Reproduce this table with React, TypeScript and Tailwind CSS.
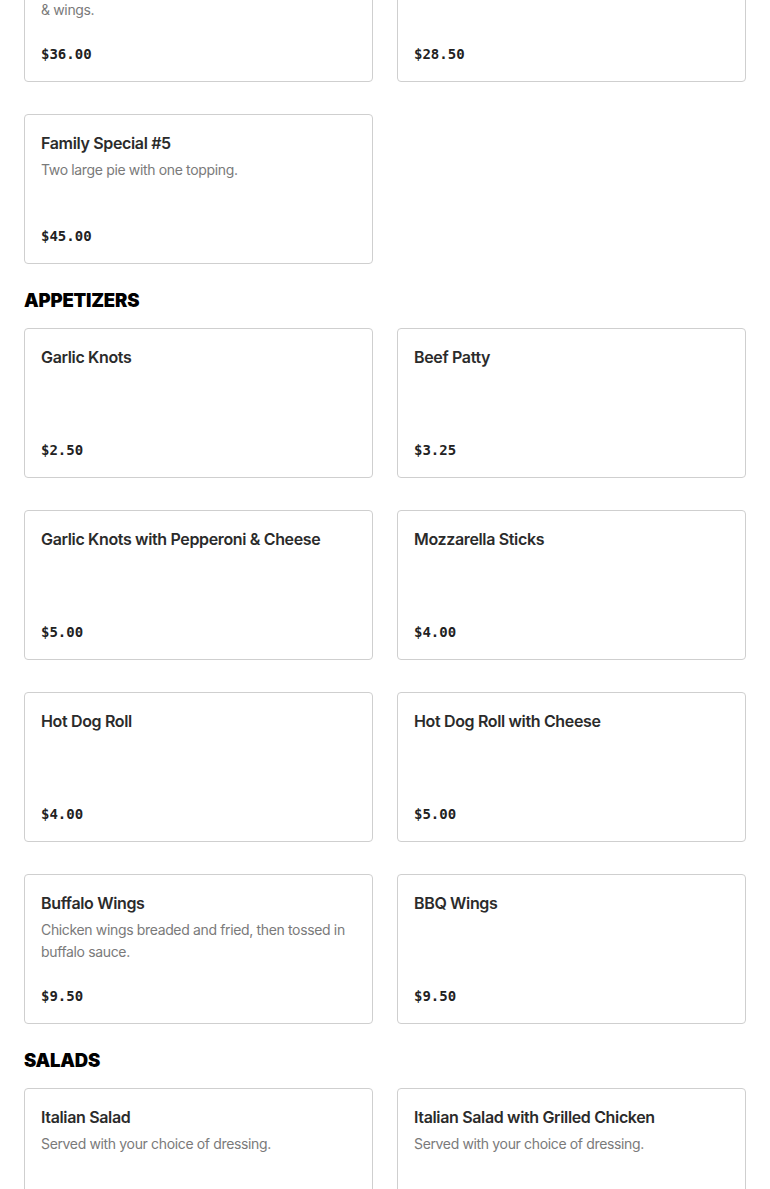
import React from "react";

type Item = { name: string; desc?: React.ReactNode; price: string };

const Card = ({ item }: { item: Item }) => (
  <div className="flex min-h-[150px] flex-col justify-between rounded-[4px] border border-[#cfcfcf] bg-white px-4 pt-4 pb-[17px]">
    <div>
      <div className="text-[16px] leading-6 font-semibold tracking-[-0.35px] text-[#2b2b2b]">{item.name}</div>
      {item.desc && (
        <div className="mt-[4px] text-[14px] leading-[22px] tracking-[-0.35px] text-[#7a7a7a]">{item.desc}</div>
      )}
    </div>
    <div className="mt-4 font-['DejaVu_Sans_Mono',monospace] text-[14px] leading-5 font-bold text-[#222]">
      {item.price}
    </div>
  </div>
);

const Grid = ({ items }: { items: Item[] }) => (
  <div className="grid grid-cols-2 gap-x-6 gap-y-8">
    {items.map((it, i) => (
      <Card key={i} item={it} />
    ))}
  </div>
);

const Header = ({ children }: { children: React.ReactNode }) => (
  <h2 className="mt-[25px] mb-[17px] text-[18.5px] leading-[22px] font-black tracking-[-0.2px] text-black">
    {children}
  </h2>
);

export default function App() {
  const specials: Item[] = [
    {
      name: "Family Special #4",
      desc: (
        <>
          One large pie with one topping, garlic knots
          <br />& wings.
        </>
      ),
      price: "$36.00",
    },
    { name: "Family Special #3", desc: "One large pie and a two liter soda.", price: "$28.50" },
    { name: "Family Special #5", desc: "Two large pie with one topping.", price: "$45.00" },
  ];
  const appetizers: Item[] = [
    { name: "Garlic Knots", price: "$2.50" },
    { name: "Beef Patty", price: "$3.25" },
    { name: "Garlic Knots with Pepperoni & Cheese", price: "$5.00" },
    { name: "Mozzarella Sticks", price: "$4.00" },
    { name: "Hot Dog Roll", price: "$4.00" },
    { name: "Hot Dog Roll with Cheese", price: "$5.00" },
    { name: "Buffalo Wings", desc: "Chicken wings breaded and fried, then tossed in buffalo sauce.", price: "$9.50" },
    { name: "BBQ Wings", price: "$9.50" },
  ];
  const salads: Item[] = [
    { name: "Italian Salad", desc: "Served with your choice of dressing.", price: "$7.00" },
    { name: "Italian Salad with Grilled Chicken", desc: "Served with your choice of dressing.", price: "$10.00" },
  ];
  return (
    <div className="h-[1189px] overflow-hidden bg-white font-['Inter',sans-serif]">
      <div className="-mt-[68px] px-6">
        <Grid items={specials} />
        <Header>APPETIZERS</Header>
        <Grid items={appetizers} />
        <Header>SALADS</Header>
        <Grid items={salads} />
      </div>
    </div>
  );
}
